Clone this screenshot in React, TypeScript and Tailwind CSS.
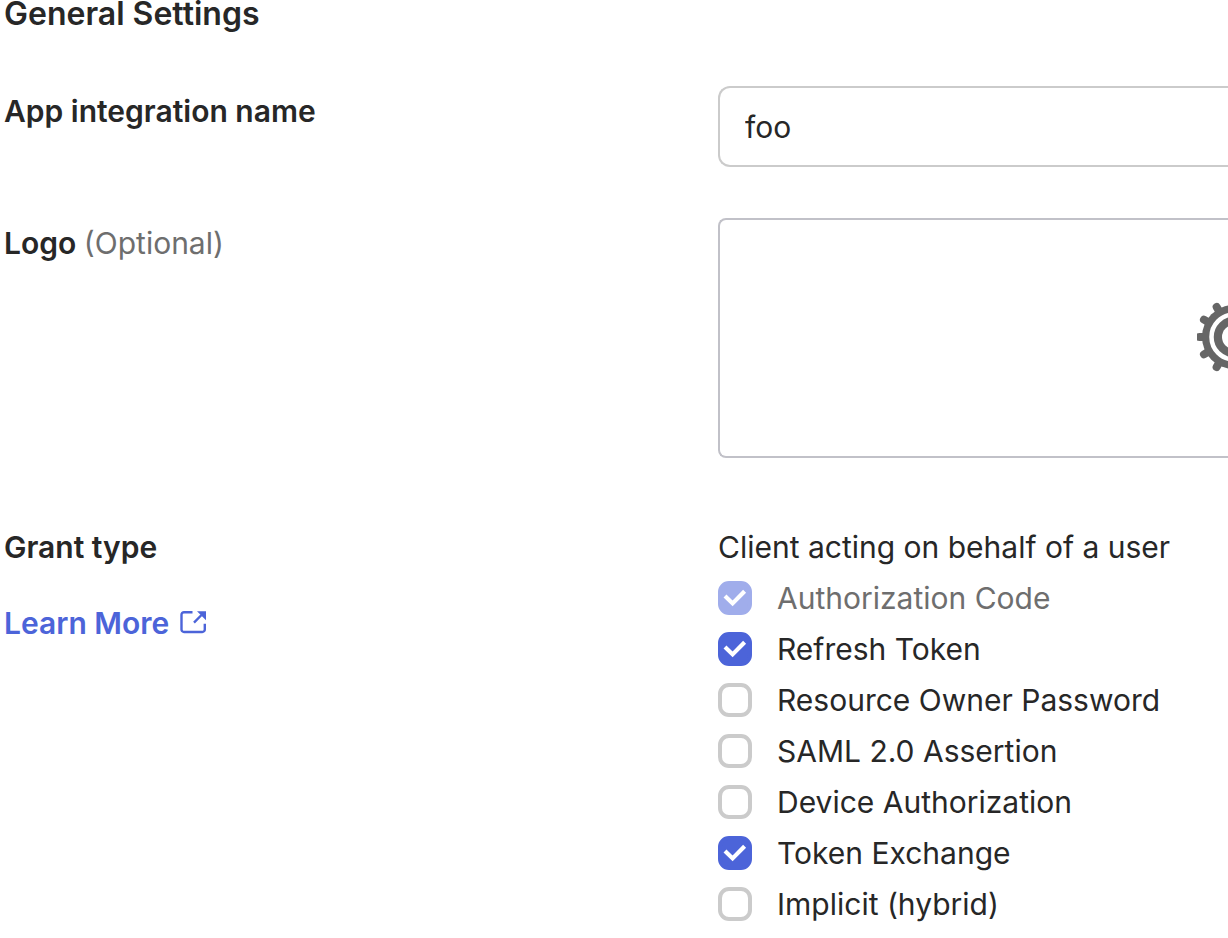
import { useState } from "react";

type Grant = { id: string; label: string; checked: boolean; disabled?: boolean };

const initialGrants: Grant[] = [
  { id: "authorization_code", label: "Authorization Code", checked: true, disabled: true },
  { id: "refresh_token", label: "Refresh Token", checked: true },
  { id: "password", label: "Resource Owner Password", checked: false },
  { id: "saml2", label: "SAML 2.0 Assertion", checked: false },
  { id: "device", label: "Device Authorization", checked: false },
  { id: "token_exchange", label: "Token Exchange", checked: true },
  { id: "implicit", label: "Implicit (hybrid)", checked: false },
];

const toothAngles = [90, 120, 150, 180, 210, 240, 270];

function Gear() {
  return (
    <svg className="h-[78px] w-[31px] shrink-0" viewBox="0 -1 31 78" aria-hidden="true">
      <g stroke="#666666" strokeWidth="8" strokeLinecap="round">
        {toothAngles.map((a) => (
          <line
            key={a}
            x1="37"
            y1="37"
            x2={37 + 34.7 * Math.cos((a * Math.PI) / 180)}
            y2={37 + 34.7 * Math.sin((a * Math.PI) / 180)}
          />
        ))}
      </g>
      <circle cx="37" cy="37" r="32" fill="#666666" />
      <circle cx="37" cy="37" r="22.5" fill="none" stroke="#fff" strokeWidth="4.5" />
      <circle cx="37" cy="37" r="12" fill="#fff" />
    </svg>
  );
}

function ExternalIcon() {
  return (
    <svg className="h-6 w-[26px]" viewBox="0 0 26 24" fill="none" aria-hidden="true">
      <path
        d="M12.5 1.2H4A2.5 2.5 0 0 0 1.5 3.7v14.8A2.5 2.5 0 0 0 4 21h18.3a2.5 2.5 0 0 0 2.5-2.5v-5.7M14 11.7L21.5 4"
        stroke="#4c64d9"
        strokeWidth="2.4"
      />
      <path d="M17 0.2h9v9z" fill="#4c64d9" />
    </svg>
  );
}

function GrantOption({ grant, onChange }: { grant: Grant; onChange: () => void }) {
  return (
    <li className="flex h-[51px] items-center">
      <label
        className={
          grant.disabled
            ? "flex items-center gap-[25px] text-[#6e6e6e]"
            : "flex items-center gap-[25px]"
        }
      >
        <span className="grid size-[34px] shrink-0 place-items-center">
          <input
            type="checkbox"
            checked={grant.checked}
            disabled={grant.disabled}
            onChange={onChange}
            className="col-start-1 row-start-1 size-[34px] appearance-none rounded-[11px] border-4 border-[#cbcbcb] bg-white checked:border-[#4c64d9] checked:bg-[#4c64d9] checked:disabled:border-[#a0adeb] checked:disabled:bg-[#a0adeb]"
          />
          {grant.checked && (
            <svg
              className="pointer-events-none col-start-1 row-start-1 size-[34px]"
              viewBox="0 0 34 34"
              fill="none"
              aria-hidden="true"
            >
              <path d="M7 15L14.6 22.4L26.6 10.2" stroke="#fff" strokeWidth="4.2" />
            </svg>
          )}
        </span>
        <span>{grant.label}</span>
      </label>
    </li>
  );
}

export default function App() {
  const [name, setName] = useState("foo");
  const [grants, setGrants] = useState(initialGrants);
  const toggle = (id: string) =>
    setGrants((all) => all.map((g) => (g.id === id ? { ...g, checked: !g.checked } : g)));

  return (
    <main className="bg-white pl-1 font-['Inter',sans-serif] text-[30px] leading-9 text-[#272727]">
      <h1 className="text-[32px] leading-7 font-semibold">General Settings</h1>

      <div className="mt-[58px] grid grid-cols-[714px_1fr]">
        <label htmlFor="app-name" className="pt-[7px] font-semibold">
          App integration name
        </label>
        <input
          id="app-name"
          value={name}
          onChange={(e) => setName(e.target.value)}
          className="h-[81px] w-full min-w-0 rounded-l-xl border-2 border-r-0 border-[#cbcbcb] bg-white px-[25px] outline-none"
        />
      </div>

      <div className="mt-[51px] grid grid-cols-[714px_1fr]">
        <h2 className="pt-[7px] font-semibold">
          Logo <span className="font-normal text-[#6e6e6e]">(Optional)</span>
        </h2>
        <div className="flex h-60 items-center justify-end rounded-l-lg border-2 border-r-0 border-[#c1c1c8]">
          <Gear />
        </div>
      </div>

      <div className="mt-[71px] grid grid-cols-[714px_1fr]">
        <div>
          <h2 className="font-semibold">Grant type</h2>
          <a
            href="#learn-more"
            className="mt-10 inline-flex items-center gap-[11px] font-semibold text-[#4c64d9]"
          >
            Learn More
            <ExternalIcon />
          </a>
        </div>
        <fieldset className="min-w-0">
          <legend>Client acting on behalf of a user</legend>
          <ul className="mt-[7px]">
            {grants.map((g) => (
              <GrantOption key={g.id} grant={g} onChange={() => toggle(g.id)} />
            ))}
          </ul>
        </fieldset>
      </div>
    </main>
  );
}
